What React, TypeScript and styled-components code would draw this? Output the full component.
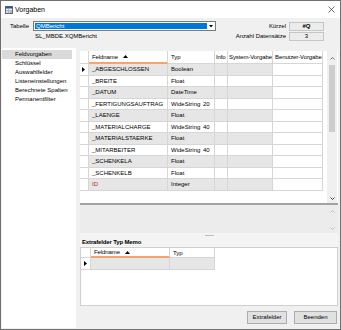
import styled, { createGlobalStyle } from "styled-components";

const GlobalStyle = createGlobalStyle`
  html, body {
    margin: 0;
    padding: 0;
    background: #fff;
  }
  body {
    font-family: "Liberation Sans", Arial, sans-serif;
    font-size: 6px;
    color: #000;
  }
  * {
    box-sizing: border-box;
  }
`;

const Window = styled.div`
  width: 341px;
  height: 330px;
  border: 1px solid #707070;
  background: #f0f0f0;
  display: flex;
  flex-direction: column;
  overflow: hidden;
`;

const TitleBar = styled.div`
  height: 17px;
  flex-shrink: 0;
  background: #fff;
  display: flex;
  align-items: center;
  padding-left: 4px;
`;

const Title = styled.span`
  font-size: 7px;
  margin-left: 2px;
`;

const CloseButton = styled.div`
  margin-left: auto;
  width: 16px;
  height: 17px;
  margin-right: 1px;
  display: flex;
  align-items: center;
  justify-content: center;
`;

const TopBar = styled.div`
  height: 30px;
  flex-shrink: 0;
  display: grid;
  grid-template-columns: 23px 183px 1fr 35px;
  grid-template-rows: 10px 10px;
  padding: 3px 16px 0 9px;
  align-items: center;
`;

const FieldLabel = styled.div<{ $right?: boolean }>`
  white-space: nowrap;
  justify-self: ${(p) => (p.$right ? "end" : "start")};
  padding-right: ${(p) => (p.$right ? "3px" : "0")};
`;

const Combo = styled.div`
  height: 10px;
  display: flex;
  border: 1px solid #7a7a7a;
  background: #fff;
  padding: 1px 0 1px 1px;
`;

const ComboValue = styled.div`
  flex: 1;
  background: #0078d7;
  color: #fff;
  padding-left: 1px;
  display: flex;
  align-items: center;
`;

const ComboArrow = styled.div`
  width: 8px;
  display: flex;
  align-items: center;
  justify-content: center;
`;

const PathText = styled.div`
  padding-left: 2px;
`;

const ValueBox = styled.div<{ $bold?: boolean }>`
  height: 9px;
  border: 1px solid #c6c6c6;
  background: #ececec;
  display: flex;
  align-items: center;
  justify-content: center;
  font-weight: ${(p) => (p.$bold ? 700 : 400)};
`;

const Main = styled.div`
  flex: 1;
  min-height: 0;
  display: flex;
  gap: 4px;
  padding: 0 2px 1px 1px;
`;

const SidePanel = styled.div`
  width: 74px;
  flex-shrink: 0;
  background: #fff;
  padding-top: 2px;
`;

const NavItem = styled.div<{ $active?: boolean }>`
  height: 9px;
  line-height: 9px;
  padding-left: 13px;
  margin-right: 4px;
  white-space: nowrap;
  background: ${(p) => (p.$active ? "#dadada" : "transparent")};
`;

const Content = styled.div`
  flex: 1;
  min-width: 0;
  display: flex;
  flex-direction: column;
  padding-top: 3px;
`;

const FieldGrid = styled.div`
  height: 154px;
  flex-shrink: 0;
  display: flex;
  background: #fff;
  border-bottom: 2px solid #a3a3a3;
`;

const Table = styled.div`
  display: flex;
  flex-direction: column;
`;

const Row = styled.div<{ $cols: string; $h: number }>`
  display: grid;
  grid-template-columns: ${(p) => p.$cols};
  height: ${(p) => p.$h}px;
`;

const Cell = styled.div<{ $shade?: boolean; $pad?: number; $sorted?: boolean; $red?: boolean }>`
  display: flex;
  align-items: center;
  white-space: nowrap;
  overflow: hidden;
  padding-left: ${(p) => p.$pad ?? 3}px;
  background: ${(p) => (p.$shade ? "#e6e6e6" : "#fff")};
  color: ${(p) => (p.$red ? "#b3302a" : "#000")};
  border-right: 1px solid #d6d6d6;
  border-bottom: ${(p) => (p.$sorted ? "2px solid #f5a370" : "1px solid #d6d6d6")};
`;

const HeadCell = styled(Cell)`
  letter-spacing: -0.1px;
`;

const SortMark = styled.svg`
  margin-left: 5px;
`;

const TypeName = styled.span`
  display: inline-block;
  width: 32px;
`;

const Filler = styled.div`
  flex: 1;
`;

const ScrollBar = styled.div<{ $light?: boolean }>`
  width: 10px;
  margin-right: 1px;
  flex-shrink: 0;
  background: #f0f0f0;
  display: flex;
  flex-direction: column;
  align-items: center;
  padding: 6px 0 3px;
`;

const Thumb = styled.div`
  width: 6px;
  height: 67px;
  margin-top: 5px;
  background: #cdcdcd;
`;

const DetailPanel = styled.div`
  height: 28px;
  flex-shrink: 0;
  display: flex;
  background: #ececec;
`;

const MiniScroll = styled.div`
  width: 10px;
  margin-right: 1px;
  margin-left: auto;
  display: flex;
  flex-direction: column;
  align-items: center;
  justify-content: space-between;
  padding: 5px 0 3px;
`;

const LowerHead = styled.div`
  flex-shrink: 0;
  background: #f4f4f4;
`;

const Splitter = styled.div`
  height: 5px;
  display: flex;
  align-items: center;
  justify-content: center;
`;

const Grip = styled.div`
  width: 9px;
  height: 1px;
  background: #bdbdbd;
`;

const SectionLabel = styled.div`
  height: 9px;
  line-height: 9px;
  padding-left: 2px;
  font-weight: 700;
  letter-spacing: -0.15px;
`;

const ExtraGrid = styled.div`
  height: 59px;
  flex-shrink: 0;
  background: #fff;
  border: 1px solid #cfcfcf;
`;

const ButtonBar = styled.div`
  height: 22px;
  flex-shrink: 0;
  display: flex;
  justify-content: flex-end;
  align-items: center;
  gap: 7px;
  padding-right: 1px;
`;

const Button = styled.div<{ $w: number }>`
  width: ${(p) => p.$w}px;
  height: 13px;
  background: #e1e1e1;
  border: 1px solid #adadad;
  display: flex;
  align-items: center;
  justify-content: center;
`;

const COLS = "9px 79px 47px 13px 45px 50px";
const EXTRA_COLS = "10px 79px 45px";

type Field = { name: string; type: string; len?: string; red?: boolean };

const fields: Field[] = [
  { name: "_ABGESCHLOSSEN", type: "Boolean" },
  { name: "_BREITE", type: "Float" },
  { name: "_DATUM", type: "DateTime" },
  { name: "_FERTIGUNGSAUFTRAG", type: "WideString", len: "20" },
  { name: "_LAENGE", type: "Float" },
  { name: "_MATERIALCHARGE", type: "WideString", len: "40" },
  { name: "_MATERIALSTAERKE", type: "Float" },
  { name: "_MITARBEITER", type: "WideString", len: "40" },
  { name: "_SCHENKELA", type: "Float" },
  { name: "_SCHENKELB", type: "Float" },
  { name: "ID", type: "Integer", red: true },
];

const navItems = [
  "Feldvorgaben",
  "Schlüssel",
  "Auswahlfelder",
  "Listeneinstellungen",
  "Berechnete Spalten",
  "Permanentfilter",
];

function RowMarker() {
  return (
    <svg width="3" height="5" viewBox="0 0 3 5">
      <path d="M0 0 L3 2.5 L0 5 Z" fill="#000" />
    </svg>
  );
}

function SortUp() {
  return (
    <SortMark width="5" height="3" viewBox="0 0 5 3">
      <path d="M0 3 L2.5 0 L5 3 Z" fill="#000" />
    </SortMark>
  );
}

function Chevron({ down, color }: { down?: boolean; color: string }) {
  return (
    <svg width="5" height="3" viewBox="0 0 5 3">
      <path
        d={down ? "M0.5 0.5 L2.5 2.5 L4.5 0.5" : "M0.5 2.5 L2.5 0.5 L4.5 2.5"}
        fill="none"
        stroke={color}
        strokeWidth="0.9"
      />
    </svg>
  );
}

function AppIcon() {
  return (
    <svg width="8" height="8" viewBox="0 0 8 8">
      <rect x="0.5" y="0.5" width="7" height="7" fill="#eef2f8" stroke="#5a6a80" />
      <rect x="0.5" y="0.5" width="7" height="2" fill="#2f5597" />
      <path d="M1 4.5 H7 M1 6 H7 M3.5 3 V7.5" stroke="#8a9ab0" strokeWidth="0.6" />
      <rect x="5" y="4.8" width="2" height="2" fill="#e0b040" />
    </svg>
  );
}

function App() {
  return (
    <>
      <GlobalStyle />
      <Window>
        <TitleBar>
          <AppIcon />
          <Title>Vorgaben</Title>
          <CloseButton>
            <svg width="7" height="7" viewBox="0 0 7 7">
              <path d="M0.5 0.5 L6.5 6.5 M6.5 0.5 L0.5 6.5" stroke="#333" strokeWidth="0.7" />
            </svg>
          </CloseButton>
        </TitleBar>

        <TopBar>
          <FieldLabel>Tabelle</FieldLabel>
          <Combo>
            <ComboValue>QMBericht</ComboValue>
            <ComboArrow>
              <svg width="4" height="3" viewBox="0 0 4 3">
                <path d="M0 0 L4 0 L2 2.5 Z" fill="#000" />
              </svg>
            </ComboArrow>
          </Combo>
          <FieldLabel $right>Kürzel</FieldLabel>
          <ValueBox $bold>#Q</ValueBox>

          <div />
          <PathText>SL_MBDE.XQMBericht</PathText>
          <FieldLabel $right>Anzahl Datensätze</FieldLabel>
          <ValueBox>3</ValueBox>
        </TopBar>

        <Main>
          <SidePanel>
            {navItems.map((item, i) => (
              <NavItem key={item} $active={i === 0}>
                {item}
              </NavItem>
            ))}
          </SidePanel>

          <Content>
            <FieldGrid>
              <Table>
                <Row $cols={COLS} $h={13}>
                  <HeadCell />
                  <HeadCell $sorted>
                    Feldname
                    <SortUp />
                  </HeadCell>
                  <HeadCell>Typ</HeadCell>
                  <HeadCell $pad={1}>Info</HeadCell>
                  <HeadCell $pad={1}>System-Vorgabe</HeadCell>
                  <HeadCell $pad={2}>Benutzer-Vorgabe</HeadCell>
                </Row>
                {fields.map((f, i) => {
                  const shade = i % 2 === 0;
                  return (
                    <Row key={f.name} $cols={COLS} $h={11.5}>
                      <Cell $pad={2}>{i === 0 && <RowMarker />}</Cell>
                      <Cell $shade={shade} $red={f.red}>
                        {f.name}
                      </Cell>
                      <Cell $shade={shade}>
                        <TypeName>{f.type}</TypeName>
                        {f.len}
                      </Cell>
                      <Cell $shade={shade} />
                      <Cell $shade={shade} />
                      <Cell />
                    </Row>
                  );
                })}
              </Table>
              <Filler />
              <ScrollBar>
                <Chevron color="#606060" />
                <Thumb />
                <Filler />
                <Chevron down color="#303030" />
              </ScrollBar>
            </FieldGrid>

            <DetailPanel>
              <MiniScroll>
                <Chevron color="#b8b8b8" />
                <Chevron down color="#b8b8b8" />
              </MiniScroll>
            </DetailPanel>

            <LowerHead>
              <Splitter>
                <Grip />
              </Splitter>
              <SectionLabel>Extrafelder Typ Memo</SectionLabel>
            </LowerHead>

            <ExtraGrid>
              <Row $cols={EXTRA_COLS} $h={10}>
                <HeadCell />
                <HeadCell $sorted>
                  Feldname
                  <SortUp />
                </HeadCell>
                <HeadCell>Typ</HeadCell>
              </Row>
              <Row $cols={EXTRA_COLS} $h={12}>
                <Cell $pad={3}>
                  <RowMarker />
                </Cell>
                <Cell $shade />
                <Cell $shade />
              </Row>
            </ExtraGrid>

            <ButtonBar>
              <Button $w={40}>Extrafelder</Button>
              <Button $w={43}>Beenden</Button>
            </ButtonBar>
          </Content>
        </Main>
      </Window>
    </>
  );
}

export default App;
